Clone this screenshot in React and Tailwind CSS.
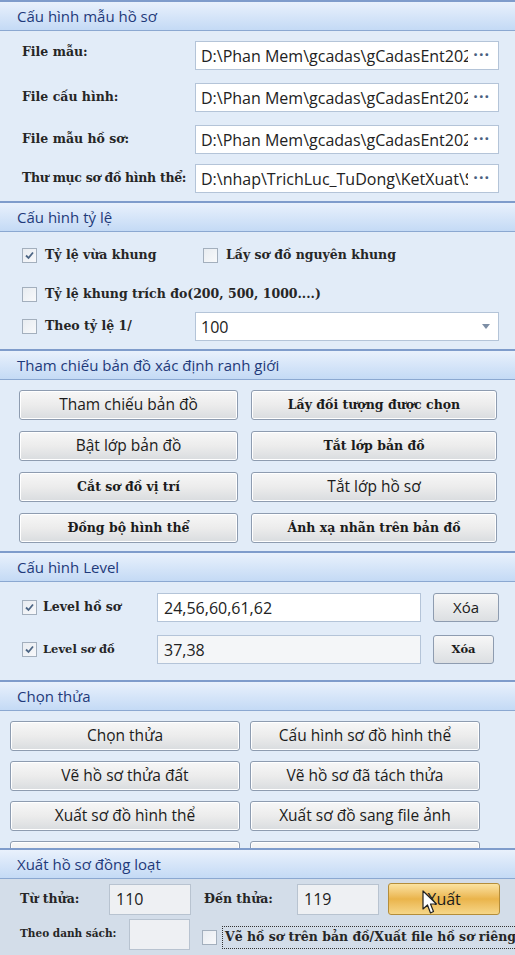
import React from 'react';

const serif = { fontFamily: '"DejaVu Serif", "Liberation Serif", serif' };
const sans = { fontFamily: '"Open Sans", "Noto Sans", sans-serif' };

const Header = ({ title }) => (
  <div
    className="h-[31px] flex items-center pl-[17px] border-t-2 border-b border-t-[#7f9ccb] border-b-[#8ba8d1] bg-gradient-to-b from-[#e9f1fc] to-[#c4daf5] text-[15px] text-[#1f3a7a]"
    style={sans}
  >
    {title}
  </div>
);

const Check = ({ checked }) => (
  <span className="w-[15px] h-[15px] shrink-0 border border-[#a3afbd] bg-gradient-to-br from-[#e8ecf1] to-[#f8f9fb] flex items-center justify-center">
    {checked && (
      <svg width="11" height="11" viewBox="0 0 11 11">
        <path d="M2 5.5 L4.5 8 L9 2.5" fill="none" stroke="#4d6685" strokeWidth="1.8" />
      </svg>
    )}
  </span>
);

const PathBox = ({ value }) => (
  <div
    className="w-[304px] shrink-0 h-[29px] bg-white border border-[#b4c4d8] flex items-center pl-[5px] pr-[8px] text-[16px] text-[#222]"
    style={sans}
  >
    <span className="flex-1 overflow-hidden whitespace-nowrap">{value}</span>
    <span className="w-[22px] shrink-0 text-right text-[#4a5f80] tracking-[1px] font-bold leading-none pb-[4px] bg-white">···</span>
  </div>
);

const Btn = ({ children, w, isSerif }) => (
  <button
    className={`${w} h-[30px] rounded-[3px] border border-[#8e9cb0] bg-gradient-to-b from-[#f7f7f7] via-[#ececec] to-[#d9dcdf] text-[#1b1b1b] shadow-[inset_0_0_0_1px_#ffffff] whitespace-nowrap`}
    style={isSerif ? { ...serif, fontWeight: 700, fontSize: 12.5 } : { ...sans, fontSize: 15.5 }}
  >
    {children}
  </button>
);

// size passed as style so it never fights another text-[..] class
const Label = ({ children, className = '', size = 12.5 }) => (
  <span
    className={`font-bold text-[#262626] whitespace-nowrap shrink-0 ${className}`}
    style={{ ...serif, fontSize: size }}
  >
    {children}
  </span>
);

const Field = ({ children, className = '' }) => (
  <div
    className={`shrink-0 h-[31px] bg-[#eef0f3] border border-[#b8c3d0] flex items-center pl-[6px] text-[16px] text-[#222] ${className}`}
    style={sans}
  >
    {children}
  </div>
);

export default function App() {
  return (
    <div className="w-[515px] h-[955px] overflow-hidden bg-[#dde8f6] select-none">
      {/* Cấu hình mẫu hồ sơ */}
      <div className="h-[201px] flex flex-col">
        <Header title="Cấu hình mẫu hồ sơ" />
        <div className="flex-1 bg-[#e2ecf8] pl-[22px] pr-[16px] pt-[10px] flex flex-col gap-[13px]">
          <div className="flex items-start justify-between">
            <Label className="pt-[2px]">File mẫu:</Label>
            <PathBox value="D:\Phan Mem\gcadas\gCadasEnt2024" />
          </div>
          <div className="flex items-center justify-between">
            <Label>File cấu hình:</Label>
            <PathBox value="D:\Phan Mem\gcadas\gCadasEnt2024" />
          </div>
          <div className="flex items-center justify-between mb-[-3px]">
            <Label>File mẫu hồ sơ:</Label>
            <PathBox value="D:\Phan Mem\gcadas\gCadasEnt2024" />
          </div>
          <div className="flex items-center justify-between">
            <Label className="tracking-[-0.3px]">Thư mục sơ đồ hình thể:</Label>
            <PathBox value="D:\nhap\TrichLuc_TuDong\KetXuat\SoDo" />
          </div>
        </div>
      </div>

      {/* Cấu hình tỷ lệ */}
      <div className="h-[148px] flex flex-col">
        <Header title="Cấu hình tỷ lệ" />
        <div className="flex-1 bg-[#e2ecf8] pl-[22px] pr-[16px] pt-[13px] flex flex-col">
          <div className="flex items-center h-[20px]">
            <Check checked />
            <Label className="ml-[8px] w-[158px]">Tỷ lệ vừa khung</Label>
            <Check />
            <Label className="ml-[8px]">Lấy sơ đồ nguyên khung</Label>
          </div>
          <div className="flex items-center h-[20px] mt-[19px]">
            <Check />
            <Label className="ml-[8px]">Tỷ lệ khung trích đo(200, 500, 1000....)</Label>
          </div>
          <div className="flex items-center justify-between mt-[8px]">
            <div className="flex items-center">
              <Check />
              <Label className="ml-[8px]">Theo tỷ lệ 1/</Label>
            </div>
            <div
              className="w-[304px] h-[29px] bg-white border border-[#b4c4d8] flex items-center pl-[5px] pr-[8px] text-[16px] text-[#222]"
              style={sans}
            >
              <span className="flex-1">100</span>
              <svg width="8" height="5" viewBox="0 0 8 5">
                <path d="M0 0 L8 0 L4 5 Z" fill="#7d8ea5" />
              </svg>
            </div>
          </div>
        </div>
      </div>

      {/* Tham chiếu bản đồ */}
      <div className="h-[202px] flex flex-col">
        <Header title="Tham chiếu bản đồ xác định ranh giới" />
        <div className="flex-1 bg-[#e2ecf8] pl-[19px] pt-[10px] grid grid-cols-[219px_246px] gap-x-[13px] gap-y-[11px] content-start">
          <Btn w="w-[219px]">Tham chiếu bản đồ</Btn>
          <Btn w="w-[246px]" isSerif>Lấy đối tượng được chọn</Btn>
          <Btn w="w-[219px]">Bật lớp bản đồ</Btn>
          <Btn w="w-[246px]" isSerif>Tắt lớp bản đồ</Btn>
          <Btn w="w-[219px]" isSerif>Cắt sơ đồ vị trí</Btn>
          <Btn w="w-[246px]">Tắt lớp hồ sơ</Btn>
          <Btn w="w-[219px]" isSerif>Đồng bộ hình thể</Btn>
          <Btn w="w-[246px]" isSerif>Ánh xạ nhãn trên bản đồ</Btn>
        </div>
      </div>

      {/* Cấu hình Level */}
      <div className="h-[129px] flex flex-col">
        <Header title="Cấu hình Level" />
        <div className="flex-1 bg-[#e2ecf8] pl-[22px] pt-[11px] flex flex-col gap-[13px]">
          <div className="flex items-center h-[29px]">
            <Check checked />
            <Label className="ml-[6px] w-[114px]">Level hồ sơ</Label>
            <div className="w-[264px] h-[29px] bg-white border border-[#b4c4d8] flex items-center pl-[6px] text-[16px] text-[#222]" style={sans}>
              24,56,60,61,62
            </div>
            <button
              className="ml-[12px] w-[66px] h-[29px] rounded-[3px] border border-[#8e9cb0] bg-gradient-to-b from-[#f7f7f7] to-[#dcdfe2] text-[15px] text-[#1b1b1b]"
              style={sans}
            >
              Xóa
            </button>
          </div>
          <div className="flex items-center h-[29px]">
            <Check checked />
            <Label className="ml-[6px] w-[114px]" size={11.5}>Level sơ đồ</Label>
            <div className="w-[264px] h-[29px] bg-[#f4f6f8] border border-[#b4c4d8] flex items-center pl-[6px] text-[16px] text-[#222]" style={sans}>
              37,38
            </div>
            <button
              className="ml-[12px] w-[61px] h-[29px] rounded-[3px] border border-[#8e9cb0] bg-gradient-to-b from-[#f7f7f7] to-[#dcdfe2] text-[11.5px] font-bold text-[#1b1b1b]"
              style={serif}
            >
              Xóa
            </button>
          </div>
        </div>
      </div>

      {/* Chọn thửa */}
      <div className="h-[168px] flex flex-col">
        <Header title="Chọn thửa" />
        <div className="flex-1 overflow-hidden bg-[#e2ecf8] pl-[10px] pt-[10px] grid grid-cols-[230px_230px] gap-x-[10px] gap-y-[10px] content-start">
          <Btn w="w-[230px]">Chọn thửa</Btn>
          <Btn w="w-[230px]">Cấu hình sơ đồ hình thể</Btn>
          <Btn w="w-[230px]">Vẽ hồ sơ thửa đất</Btn>
          <Btn w="w-[230px]">Vẽ hồ sơ đã tách thửa</Btn>
          <Btn w="w-[230px]">Xuất sơ đồ hình thể</Btn>
          <Btn w="w-[230px]">Xuất sơ đồ sang file ảnh</Btn>
          <Btn w="w-[230px]"> </Btn>
          <Btn w="w-[230px]"> </Btn>
        </div>
      </div>

      {/* Xuất hồ sơ đồng loạt */}
      <div className="h-[107px] flex flex-col">
        <Header title="Xuất hồ sơ đồng loạt" />
        <div className="flex-1 bg-[#d3dde9] pl-[20px] pt-[4px] flex flex-col">
          <div className="flex items-center h-[32px]">
            <Label className="w-[89px]">Từ thửa:</Label>
            <Field className="w-[82px]">110</Field>
            <Label className="ml-[13px] w-[93px]">Đến thửa:</Label>
            <Field className="w-[82px]">119</Field>
            <button
              className="relative shrink-0 ml-[9px] w-[112px] h-[32px] rounded-[3px] border border-[#b48d3a] bg-gradient-to-b from-[#fbe3a0] via-[#eab44a] to-[#f6d687] text-[16px] text-[#1b1b1b]"
              style={sans}
            >
              Xuất
              <svg className="absolute left-[33px] top-[6px]" width="18" height="26" viewBox="0 0 18 26">
                <path d="M1 1 L1 19 L5.5 15 L8.5 23 L11.5 21.5 L8.5 14 L14.5 14 Z" fill="#ffffff" stroke="#222" strokeWidth="1.2" strokeLinejoin="round" />
              </svg>
            </button>
          </div>
          <div className="flex items-center h-[32px] mt-[3px]">
            <Label className="w-[109px]" size={10.5}>Theo danh sách:</Label>
            <Field className="w-[61px]" />
            <span className="shrink-0 ml-[12px] mt-[6px]">
              <Check />
            </span>
            <span className="shrink-0 ml-[5px] mt-[6px] h-[23px] px-[2px] border border-dotted border-[#333] flex items-center whitespace-nowrap">
              <Label>Vẽ hồ sơ trên bản đồ/Xuất file hồ sơ riêng</Label>
            </span>
          </div>
        </div>
      </div>
    </div>
  );
}
